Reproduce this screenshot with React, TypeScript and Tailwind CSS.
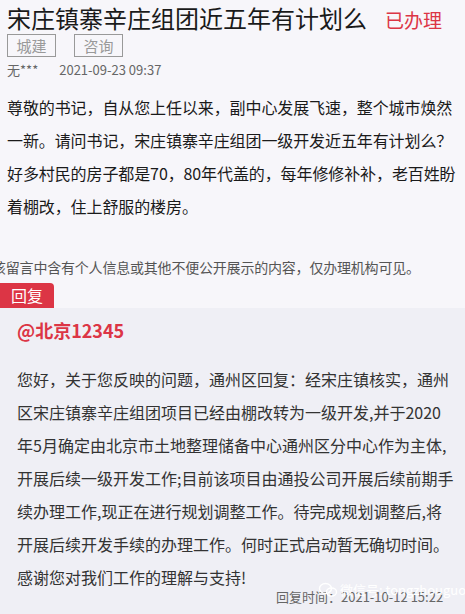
const font = { fontFamily: '"Noto Sans CJK SC", "Noto Sans", sans-serif' };

const question = [
  "尊敬的书记，自从您上任以来，副中心发展飞速，整个城市焕然",
  "一新。请问书记，宋庄镇寨辛庄组团一级开发近五年有计划么？",
  "好多村民的房子都是70，80年代盖的，每年修修补补，老百姓盼",
  "着棚改，住上舒服的楼房。",
];

const answer = [
  "您好，关于您反映的问题，通州区回复：经宋庄镇核实，通州",
  "区宋庄镇寨辛庄组团项目已经由棚改转为一级开发,并于2020",
  "年5月确定由北京市土地整理储备中心通州区分中心作为主体,",
  "开展后续一级开发工作;目前该项目由通投公司开展后续前期手",
  "续办理工作,现正在进行规划调整工作。待完成规划调整后,将",
  "开展后续开发手续的办理工作。何时正式启动暂无确切时间。",
  "感谢您对我们工作的理解与支持!",
];

export default function App() {
  return (
    <div className="w-[465px] h-[614px] overflow-hidden bg-[#f7f6fa] text-[#222]" style={font}>
      <div className="px-[7px]">
        <div className="flex items-baseline">
          <h1 className="text-[24px] leading-[36px] text-[#1a1a1a]">宋庄镇寨辛庄组团近五年有计划么</h1>
          <span className="ml-[18px] text-[19px] text-[#dc3545]">已办理</span>
        </div>
        <div className="flex gap-[18px] mt-[-2px]">
          <span className="w-[49px] h-[23px] border border-[#999] text-[#999] text-[15px] leading-[21px] text-center">城建</span>
          <span className="w-[49px] h-[23px] border border-[#999] text-[#999] text-[15px] leading-[21px] text-center">咨询</span>
        </div>
        <div className="flex gap-[21px] mt-[4px] text-[13px] leading-[18px] text-[#666]">
          <span>无***</span>
          <span>2021-09-23 09:37</span>
        </div>
        <div className="mt-[12px] text-[16px] leading-[33px] text-[#1a1a1a] whitespace-nowrap">
          {question.map((l) => (
            <p key={l} className="tracking-[-0.1px]">{l}</p>
          ))}
        </div>
      </div>
      <p className="mt-[34px] ml-[-8px] text-[14px] leading-[20px] text-[#555] whitespace-nowrap tracking-[-0.2px]">
        该留言中含有个人信息或其他不便公开展示的内容，仅办理机构可见。
      </p>
      <div className="mt-[6px] w-[54px] h-[25px] bg-[#dc3545] rounded-tr-[4px] text-white text-[16px] leading-[25px] text-center">
        回复
      </div>
      <div className="relative bg-[#efeff5] h-[400px] px-[17px] pt-[10px]">
        <div className="text-[18px] font-bold leading-[24px] text-[#dc3545]">@北京12345</div>
        <div className="mt-[21px] text-[16px] leading-[33px] text-[#333] whitespace-nowrap">
          {answer.map((l) => (
            <p key={l}>{l}</p>
          ))}
        </div>
        <div className="mt-[-6px] pl-[259px] text-[13px] leading-[18px] text-[#666] whitespace-nowrap">
          回复时间：2021-10-12 15:22
        </div>
        <div className="absolute left-[318px] top-[272px] flex items-center gap-[2px] text-white text-[13px] whitespace-nowrap">
          <svg width="20" height="16" viewBox="0 0 20 16" fill="none" stroke="white" strokeWidth="1.4">
            <ellipse cx="7.5" cy="6.5" rx="6" ry="5" />
            <ellipse cx="13.5" cy="10" rx="5" ry="4" />
          </svg>
          <span>微信号: tongzhouguo</span>
        </div>
      </div>
    </div>
  );
}
